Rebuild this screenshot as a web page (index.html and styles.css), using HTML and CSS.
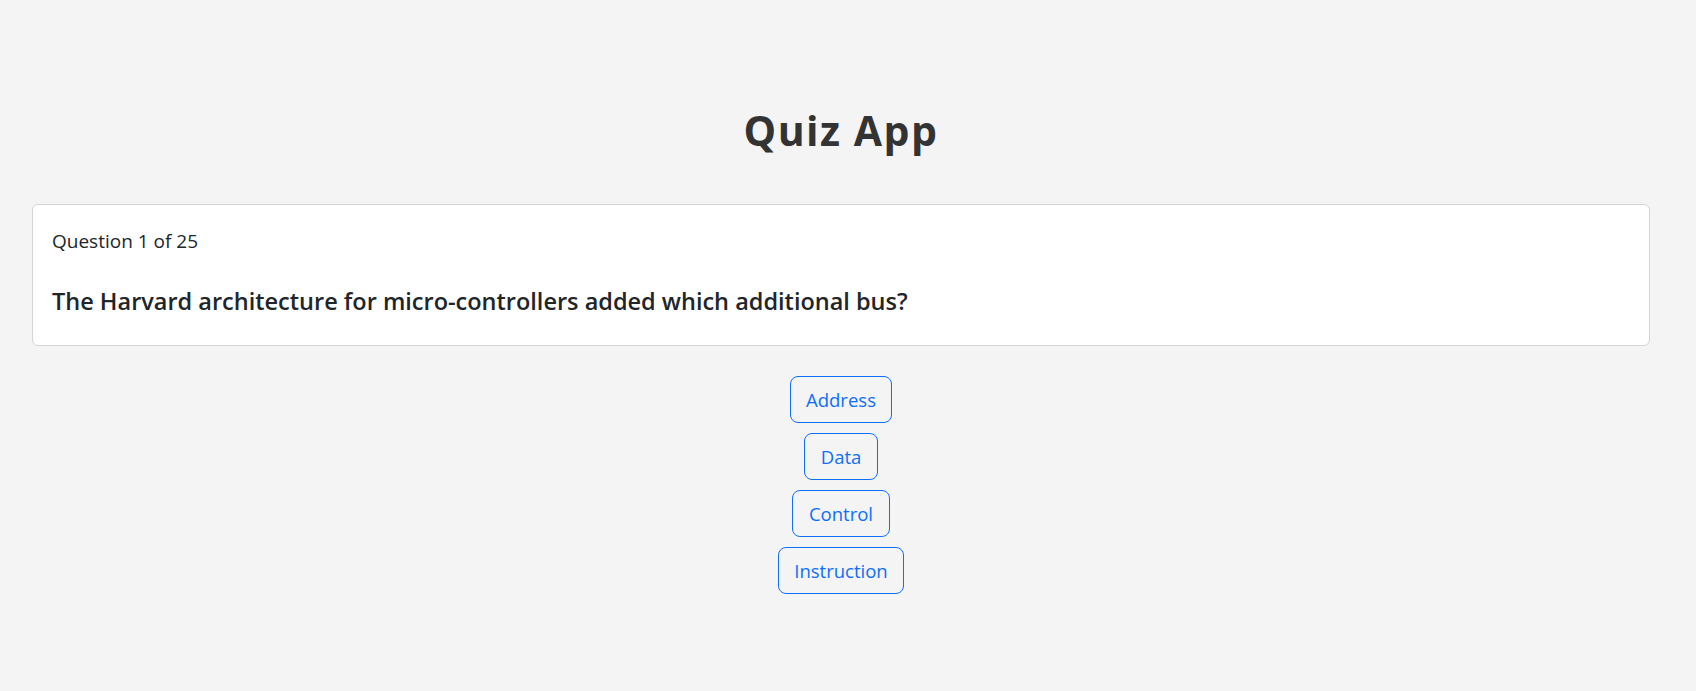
FILE: index.html
```html
<!DOCTYPE html>
<html lang="en">
<head>
<meta charset="utf-8">
<title>Quiz App</title>
<link rel="stylesheet" href="styles.css">
</head>
<body>
<main class="app">
  <h1 class="title">Quiz App</h1>
  <section class="card">
    <p class="progress">Question <span class="num">1</span> of 25</p>
    <h2 class="question">The Harvard architecture for micro-controllers added which additional bus?</h2>
  </section>
  <div class="answers">
    <button class="btn">Address</button>
    <button class="btn">Data</button>
    <button class="btn">Control</button>
    <button class="btn">Instruction</button>
  </div>
</main>
</body>
</html>
```

FILE: styles.css
```css
html, body {
  margin: 0;
  background: #f4f4f4;
  font-family: "Open Sans", "Noto Sans", sans-serif;
  color: #212529;
}

.app {
  margin: 0 46px 0 32px;
  padding-top: 106px;
}

.title {
  margin: 0 0 49px;
  text-align: center;
  font-size: 41px;
  line-height: 49px;
  letter-spacing: 1.5px;
  font-weight: 700;
  color: #333333;
}

.card {
  background: #ffffff;
  border: 1px solid #d4d4d4;
  border-radius: 6px;
  padding: 22px 19px 26px;
}

.progress {
  margin: 0 0 28px;
  font-size: 19px;
  line-height: 28.5px;
}

.question {
  margin: 0;
  font-size: 23.5px;
  line-height: 35px;
  font-weight: 600;
}

.answers {
  display: flex;
  flex-direction: column;
  align-items: center;
  gap: 10px;
  margin-top: 30px;
}

.btn {
  font-family: inherit;
  font-size: 18.5px;
  line-height: 27px;
  padding: 9px 15.5px;
  color: #0d6efd;
  background: transparent;
  border: 1px solid #0d6efd;
  border-radius: 8px;
  cursor: pointer;
}
```
